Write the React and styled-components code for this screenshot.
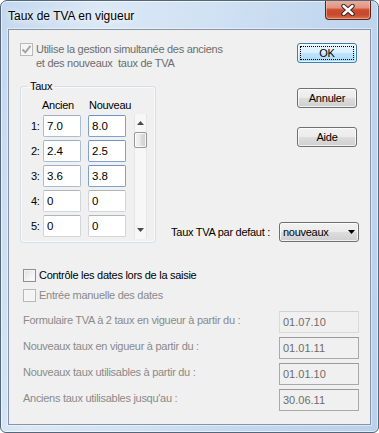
import React from "react";
import styled, { createGlobalStyle, css } from "styled-components";

const GlobalStyle = createGlobalStyle`
  html, body { margin: 0; padding: 0; background: #ffffff; }
  body {
    width: 379px; height: 433px; overflow: hidden;
    font-family: "Liberation Sans", Arial, sans-serif;
  }
  * { box-sizing: border-box; }
`;

const Window = styled.div`
  width: 379px;
  height: 433px;
  border: 1px solid #56667a;
  border-radius: 7px 7px 6px 6px;
  background: linear-gradient(100deg, #c2d7ee 0%, #dbe8f6 22%, #d1e2f3 45%, #c2d8ef 72%, #b9d1ea 100%);
  box-shadow: inset 0 0 0 1px rgba(255, 255, 255, 0.6);
  display: flex;
  flex-direction: column;
  padding: 0 7px 7px 7px;
  overflow: hidden;
`;

const TitleBar = styled.div`
  height: 28px;
  flex: none;
  display: flex;
  align-items: center;
  justify-content: space-between;
`;

const Title = styled.div`
  font-size: 12px;
  color: #000;
  text-shadow: 0 0 6px #ffffff, 0 0 10px rgba(255, 255, 255, 0.9);
  padding-top: 1px;
`;

const CloseButton = styled.div`
  align-self: flex-start;
  margin-top: -1px;
  width: 46px;
  height: 20px;
  border: 1px solid #5b2418;
  border-top: none;
  border-radius: 0 0 4px 4px;
  background: linear-gradient(180deg, #eab1a2 0%, #e09480 40%, #cc4a2d 52%, #c74a2c 78%, #d9744f 100%);
  box-shadow: inset 0 0 0 1px rgba(255, 220, 200, 0.45);
  display: flex;
  align-items: center;
  justify-content: center;
`;

const Client = styled.div`
  flex: 1;
  border: 1px solid #8594a6;
  background: #f0f0f0;
  box-shadow: 0 0 0 1px rgba(255, 255, 255, 0.45);
  padding: 12px 11px 0 11px;
  display: flex;
  flex-direction: column;
`;

const TopGrid = styled.div`
  display: grid;
  grid-template-columns: 136px 1fr auto;
  grid-template-rows: auto auto;
  row-gap: 10px;
`;

const labelText = css`
  font-size: 11px;
  letter-spacing: -0.28px;
  line-height: 14px;
`;

const SharedCheck = styled.label`
  grid-column: 1 / 3;
  grid-row: 1;
  display: flex;
  align-items: flex-start;
  gap: 3px;
  ${labelText};
  color: #6d6d6d;
`;

const Box = styled.span`
  flex: none;
  width: 13px;
  height: 13px;
  margin-top: ${(p) => (p.$top ? "1px" : "0")};
  border: 1px solid ${(p) => (p.$disabled ? "#b8b8b8" : "#8e8f8f")};
  background: ${(p) =>
    p.$disabled
      ? "#f4f4f4"
      : "linear-gradient(135deg, #dcdcdc 0%, #f4f4f4 60%, #ffffff 100%)"};
  box-shadow: inset 0 0 0 1px ${(p) => (p.$disabled ? "#f7f7f7" : "#f4f4f4")};
  display: flex;
  align-items: center;
  justify-content: center;
`;

const ButtonColumn = styled.div`
  grid-column: 3;
  grid-row: 1 / 3;
  display: flex;
  flex-direction: column;
  margin: 1px 2px 0 0;
`;

const Button = styled.div`
  position: relative;
  width: 60px;
  height: 20px;
  margin-top: ${(p) => p.$gap || 0}px;
  border: 1px solid ${(p) => (p.$default ? "#3c7fb1" : "#707070")};
  border-radius: 3px;
  background: ${(p) =>
    p.$default
      ? "linear-gradient(180deg, #eaf6fd 0%, #d9f0fc 50%, #bee6fd 51%, #a7d9f5 100%)"
      : "linear-gradient(180deg, #f2f2f2 0%, #ebebeb 50%, #dddddd 51%, #cfcfcf 100%)"};
  box-shadow: inset 0 0 0 1px rgba(255, 255, 255, 0.7);
  display: flex;
  align-items: center;
  justify-content: center;
  font-size: 11px;
  letter-spacing: -0.2px;
  color: #000;
  ${(p) =>
    p.$default &&
    css`
      &::after {
        content: "";
        position: absolute;
        inset: 2px;
        border: 1px dotted #000;
      }
    `}
`;

const GroupBox = styled.fieldset`
  grid-column: 1;
  grid-row: 2;
  margin: 0;
  min-width: 0;
  padding: 0 8px 5px 10px;
  border: 1px solid #d5dfe5;
  border-radius: 3px;
  box-shadow: inset 0 0 0 1px rgba(255, 255, 255, 0.6);
`;

const Legend = styled.legend`
  ${labelText};
  line-height: 12px;
  color: #000;
  padding: 0 2px;
  margin-left: -3px;
`;

const TaxGrid = styled.div`
  display: grid;
  grid-template-columns: 12px 45px 46px 13px;
  grid-template-rows: 14px repeat(5, 22px);
  row-gap: 3px;
  padding-top: 6px;
`;

const Header = styled.div`
  grid-row: 1;
  grid-column: ${(p) => p.$col};
  ${labelText};
  color: #000;
  margin: 0 0 1px ${(p) => p.$shift || 0}px;
`;

const RowLabel = styled.div`
  grid-column: 1;
  ${labelText};
  color: #000;
  align-self: center;
  white-space: nowrap;
`;

const RateInput = styled.input`
  width: 38px;
  height: 22px;
  margin: 0;
  padding: 0 3px;
  font-family: "Liberation Sans", Arial, sans-serif;
  font-size: 11.5px;
  color: #000;
  background: #fff;
  outline: none;
  border: 1px solid
    ${(p) => (p.$tone === "strong" ? "#7da2ce" : p.$tone === "soft" ? "#a9bed4" : "#d2d4d8")};
  border-top-color: ${(p) =>
    p.$tone === "strong" ? "#6d94c2" : p.$tone === "soft" ? "#9aaec4" : "#b0b3b8"};
  border-radius: 2px;
`;

const ScrollBar = styled.div`
  grid-column: 4;
  grid-row: 2 / 7;
  margin: -1px 0 -2px 0;
  background: #f7f7f7;
  border-left: 1px solid #e6e6e6;
  border-right: 1px solid #e6e6e6;
  display: flex;
  flex-direction: column;
`;

const ArrowArea = styled.div`
  height: 18px;
  flex: none;
  display: flex;
  align-items: center;
  justify-content: center;
`;

const Spacer = styled.div`
  flex: 1;
`;

const Thumb = styled.div`
  height: 16px;
  flex: none;
  margin: 0 -1px;
  border: 1px solid #979797;
  border-radius: 2px;
  background: linear-gradient(90deg, #f3f3f3 0%, #ebebeb 45%, #dcdcdc 55%, #d0d0d0 100%);
  box-shadow: inset 0 0 0 1px rgba(255, 255, 255, 0.8);
`;

const SelectRow = styled.div`
  grid-column: 2 / 4;
  grid-row: 2;
  align-self: end;
  justify-self: end;
  margin-bottom: 1px;
  display: flex;
  align-items: center;
  gap: 9px;
`;

const SelectLabel = styled.span`
  ${labelText};
  color: #000;
`;

const SelectBox = styled.div`
  width: 80px;
  height: 20px;
  border: 1px solid #707070;
  border-radius: 3px;
  background: linear-gradient(180deg, #f2f2f2 0%, #ebebeb 50%, #dddddd 51%, #cfcfcf 100%);
  box-shadow: inset 0 0 0 1px rgba(255, 255, 255, 0.7);
  display: flex;
  align-items: center;
  justify-content: space-between;
  padding: 0 3px 0 3px;
  ${labelText};
  color: #000;
`;

const Lower = styled.div`
  margin: 25px 0 0 3px;
  display: flex;
  flex-direction: column;
`;

const CheckLine = styled.label`
  display: flex;
  align-items: center;
  gap: 3px;
  height: 14px;
  margin-top: ${(p) => p.$gap || 0}px;
  ${labelText};
  color: ${(p) => (p.$disabled ? "#8a8a8a" : "#000")};
`;

const DateList = styled.div`
  margin-top: 9px;
  display: flex;
  flex-direction: column;
  gap: 4px;
`;

const DateRow = styled.div`
  display: flex;
  align-items: center;
  justify-content: space-between;
  height: 22px;
`;

const DateLabel = styled.span`
  ${labelText};
  color: #8a8a8a;
  margin-bottom: 4px;
`;

const DateBox = styled.div`
  width: 80px;
  height: 22px;
  border: 1px solid ${(p) => (p.$light ? "#dadada" : "#a9a9a9")};
  border-top-color: ${(p) => (p.$light ? "#d2d2d2" : "#9a9a9a")};
  background: #f0f0f0;
  padding-left: 3px;
  font-size: 11px;
  line-height: 20px;
  color: #6d6d6d;
`;

const CloseGlyph = () => (
  <svg width="14" height="12" viewBox="0 0 14 12">
    <path d="M2.5 2 L11.5 10 M11.5 2 L2.5 10" stroke="#3a2a28" strokeWidth="4.4" strokeLinecap="round" />
    <path d="M2.5 2 L11.5 10 M11.5 2 L2.5 10" stroke="#ffffff" strokeWidth="2.4" strokeLinecap="round" />
  </svg>
);

const Tick = ({ color }) => (
  <svg width="11" height="11" viewBox="0 0 11 11">
    <path d="M1.5 5.5 L4.3 8.3 L9.5 1.8" fill="none" stroke={color} strokeWidth="1.9" />
  </svg>
);

const Arrow = ({ down, color = "#4a4a4a", w = 7 }) => (
  <svg width={w} height="4" viewBox={`0 0 ${w} 4`}>
    <polygon points={down ? `0,0 ${w},0 ${w / 2},4` : `0,4 ${w},4 ${w / 2},0`} fill={color} />
  </svg>
);

const rates = [
  { n: 1, a: "7.0", b: "8.0", hl: true },
  { n: 2, a: "2.4", b: "2.5", hl: true },
  { n: 3, a: "3.6", b: "3.8", hl: true },
  { n: 4, a: "0", b: "0", hl: false },
  { n: 5, a: "0", b: "0", hl: false },
];

const dates = [
  { label: "Formulaire TVA à 2 taux en vigueur à partir du :", value: "01.07.10", light: true },
  { label: "Nouveaux taux en vigueur à partir du :", value: "01.01.11" },
  { label: "Nouveaux taux utilisables à partir du :", value: "01.01.10" },
  { label: "Anciens taux utilisables jusqu'au :", value: "30.06.11" },
];

export default function App() {
  return (
    <>
      <GlobalStyle />
      <Window>
        <TitleBar>
          <Title>Taux de TVA en vigueur</Title>
          <CloseButton>
            <CloseGlyph />
          </CloseButton>
        </TitleBar>
        <Client>
          <TopGrid>
            <SharedCheck>
              <Box $disabled $top>
                <Tick color="#a3a3a3" />
              </Box>
              <span>
                Utilise la gestion simultanée des anciens
                <br />
                et des nouveaux&nbsp; taux de TVA
              </span>
            </SharedCheck>

            <ButtonColumn>
              <Button $default>OK</Button>
              <Button $gap={25}>Annuler</Button>
              <Button $gap={19}>Aide</Button>
            </ButtonColumn>

            <GroupBox>
              <Legend>Taux</Legend>
              <TaxGrid>
                <Header $col={2} $shift={-1}>Ancien</Header>
                <Header $col={3} $shift={1}>Nouveau</Header>
                {rates.map((r) => (
                  <React.Fragment key={r.n}>
                    <RowLabel style={{ gridRow: r.n + 1 }}>{r.n}:</RowLabel>
                    <RateInput
                      style={{ gridRow: r.n + 1, gridColumn: 2 }}
                      readOnly
                      value={r.a}
                      $tone={r.hl ? "soft" : "plain"}
                    />
                    <RateInput
                      style={{ gridRow: r.n + 1, gridColumn: 3 }}
                      readOnly
                      value={r.b}
                      $tone={r.hl ? "strong" : "plain"}
                    />
                  </React.Fragment>
                ))}
                <ScrollBar>
                  <ArrowArea>
                    <Arrow />
                  </ArrowArea>
                  <Thumb />
                  <Spacer />
                  <ArrowArea>
                    <Arrow down />
                  </ArrowArea>
                </ScrollBar>
              </TaxGrid>
            </GroupBox>

            <SelectRow>
              <SelectLabel>Taux TVA par defaut :</SelectLabel>
              <SelectBox>
                <span>nouveaux</span>
                <Arrow down color="#000" w={7} />
              </SelectBox>
            </SelectRow>
          </TopGrid>

          <Lower>
            <CheckLine>
              <Box />
              <span>Contrôle les dates lors de la saisie</span>
            </CheckLine>
            <CheckLine $gap={6} $disabled>
              <Box $disabled />
              <span>Entrée manuelle des dates</span>
            </CheckLine>
            <DateList>
              {dates.map((d) => (
                <DateRow key={d.label}>
                  <DateLabel>{d.label}</DateLabel>
                  <DateBox $light={d.light}>{d.value}</DateBox>
                </DateRow>
              ))}
            </DateList>
          </Lower>
        </Client>
      </Window>
    </>
  );
}
